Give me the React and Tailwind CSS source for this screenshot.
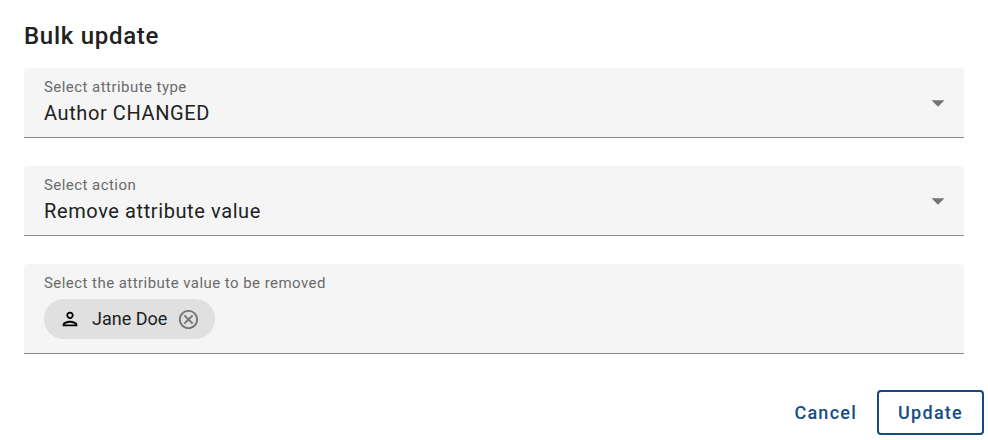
import React, { useState } from 'react';

function FilledSelect({ id, label, value, options, onChange }) {
  return (
    <div className="relative h-[70px] rounded-t border-b border-[#8c8c8c] bg-[#f5f5f5]">
      <label htmlFor={id} className="pointer-events-none absolute left-5 top-2 text-[15px] leading-[22px] tracking-[0.03em] text-[#6b6b6b]">
        {label}
      </label>
      <select
        id={id}
        value={value}
        onChange={(e) => onChange(e.target.value)}
        className="h-full w-full appearance-none bg-transparent pl-5 pr-12 pt-5 text-xl tracking-[0.03em] text-[#212121] outline-none"
      >
        {options.map((option) => (
          <option key={option}>{option}</option>
        ))}
      </select>
      <div className="pointer-events-none absolute inset-y-0 right-[19px] flex items-center pt-px">
        <svg viewBox="0 0 14 7" className="h-[7px] w-[14px]" fill="#757575">
          <path d="M.5.3h13L7 6.8z" />
        </svg>
      </div>
    </div>
  );
}

function PersonIcon() {
  return (
    <svg viewBox="0 0 24 24" className="h-[22px] w-[22px]" fill="#000000">
      <path d="M12 6c1.1 0 2 .9 2 2s-.9 2-2 2-2-.9-2-2 .9-2 2-2m0 10c2.7 0 5.8 1.29 6 2H6c.23-.72 3.31-2 6-2m0-12C9.79 4 8 5.79 8 8s1.79 4 4 4 4-1.79 4-4-1.79-4-4-4m0 10c-2.67 0-8 1.34-8 4v2h16v-2c0-2.66-5.33-4-8-4" />
    </svg>
  );
}

function CancelIcon() {
  return (
    <svg viewBox="0 0 24 24" className="h-[23px] w-[23px]" fill="#757575">
      <path d="M12 2C6.47 2 2 6.47 2 12s4.47 10 10 10 10-4.47 10-10S17.53 2 12 2m0 18c-4.41 0-8-3.59-8-8s3.59-8 8-8 8 3.59 8 8-3.59 8-8 8m3.59-13L12 10.59 8.41 7 7 8.41 10.59 12 7 15.59 8.41 17 12 13.41 15.59 17 17 15.59 13.41 12 17 8.41z" />
    </svg>
  );
}

function App() {
  const [attribute, setAttribute] = useState('Author CHANGED');
  const [action, setAction] = useState('Remove attribute value');
  const [values, setValues] = useState(['Jane Doe']);

  return (
    <form className="bg-white font-['Roboto',sans-serif]" onSubmit={(e) => e.preventDefault()}>
      <div className="px-6 pt-5">
        <h1 className="text-2xl font-medium leading-8 tracking-[0.03em] text-[#212121]">Bulk update</h1>
        <div className="mt-4 flex flex-col gap-7">
          <FilledSelect
            id="attribute-type"
            label="Select attribute type"
            value={attribute}
            options={['Author CHANGED', 'Publisher', 'Keywords']}
            onChange={setAttribute}
          />
          <FilledSelect
            id="action"
            label="Select action"
            value={action}
            options={['Remove attribute value', 'Add attribute value']}
            onChange={setAction}
          />
          <div className="h-[90px] rounded-t border-b border-[#8c8c8c] bg-[#f5f5f5] px-5 pt-2">
            <p className="text-[15px] leading-[22px] tracking-[0.03em] text-[#6b6b6b]">Select the attribute value to be removed</p>
            <div className="mt-[5px] flex gap-2">
              {values.map((value) => (
                <span key={value} className="flex h-10 items-center rounded-full bg-[#e0e0e0] px-[15px] text-lg text-[#212121]">
                  <PersonIcon />
                  <span className="ml-[11px]">{value}</span>
                  <button
                    type="button"
                    aria-label={`Remove ${value}`}
                    className="ml-[10px]"
                    onClick={() => setValues(values.filter((v) => v !== value))}
                  >
                    <CancelIcon />
                  </button>
                </span>
              ))}
            </div>
          </div>
        </div>
      </div>

      {/* Actions */}
      <div className="mt-9 flex justify-end gap-1 px-1">
        <button type="button" className="h-[45px] px-4 text-lg font-medium tracking-[0.07em] text-[#144d86]">
          Cancel
        </button>
        <button type="submit" className="h-[45px] rounded border-2 border-[#134a80] px-[19px] text-lg font-medium tracking-[0.07em] text-[#144d86]">
          Update
        </button>
      </div>
    </form>
  );
}

export default App;
